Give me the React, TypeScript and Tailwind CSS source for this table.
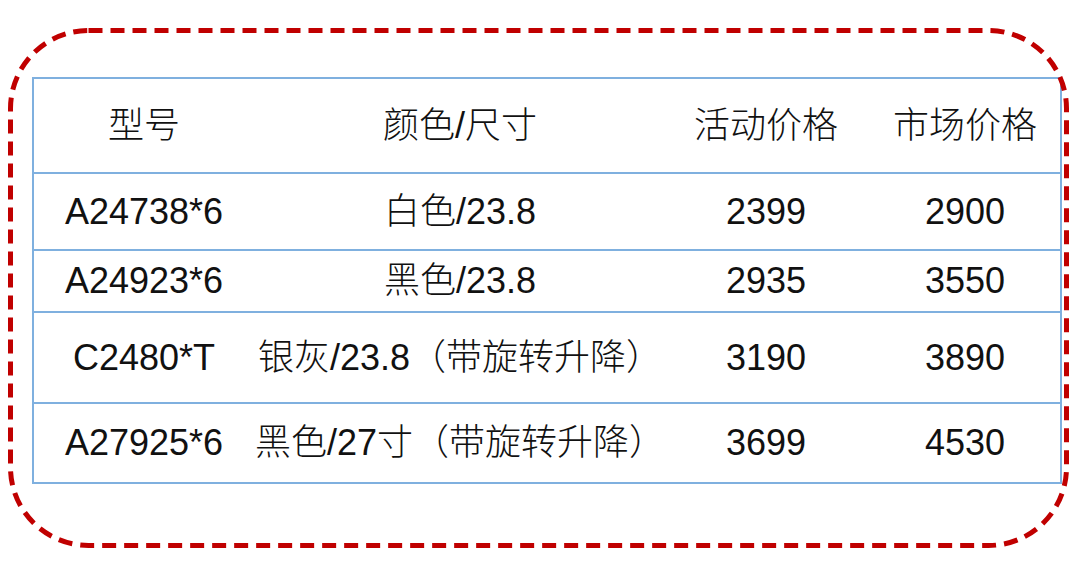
import React from "react";

const rows = [
  { model: "A24738*6", spec: "白色/23.8", promo: "2399", market: "2900", h: "h-[77px]" },
  { model: "A24923*6", spec: "黑色/23.8", promo: "2935", market: "3550", h: "h-[62px]" },
  { model: "C2480*T", spec: "银灰/23.8（带旋转升降）", promo: "3190", market: "3890", h: "h-[91px]" },
  { model: "A27925*6", spec: "黑色/27寸（带旋转升降）", promo: "3699", market: "4530", h: "h-[80px]" },
];

const cols = "grid grid-cols-[220px_412px_200px_198px] items-center text-center";

// dashed red frame around the price table
const Frame = () => (
  <svg className="pointer-events-none absolute inset-0" width="1061" height="520" viewBox="0 0 1061 520">
    <rect
      x="2.5"
      y="2.5"
      width="1056"
      height="515"
      rx="78"
      fill="none"
      stroke="#c00000"
      strokeWidth="5"
      strokeDasharray="14 8"
    />
  </svg>
);

const App = () => {
  return (
    <div
      className="h-[566px] w-[1080px] bg-white pl-2 pt-[28px] text-[36px] font-light leading-none text-[#111]"
      style={{ fontFamily: '"Liberation Sans", Arial, "Noto Sans CJK SC", sans-serif' }}
    >
      <div className="relative h-[520px] w-[1061px] pl-[24px] pr-[7px] pt-[49px]">
        <Frame />
        <div className="border-2 border-[#7fb0df]">
          <div className={`${cols} h-[93px]`}>
            <div>型号</div>
            <div>颜色/尺寸</div>
            <div>活动价格</div>
            <div>市场价格</div>
          </div>
          {rows.map((r) => (
            <div key={r.model} className={`${cols} ${r.h} border-t-2 border-[#7fb0df]`}>
              <div className="whitespace-nowrap">{r.model}</div>
              <div className="whitespace-nowrap">{r.spec}</div>
              <div>{r.promo}</div>
              <div>{r.market}</div>
            </div>
          ))}
        </div>
      </div>
    </div>
  );
};

export default App;
